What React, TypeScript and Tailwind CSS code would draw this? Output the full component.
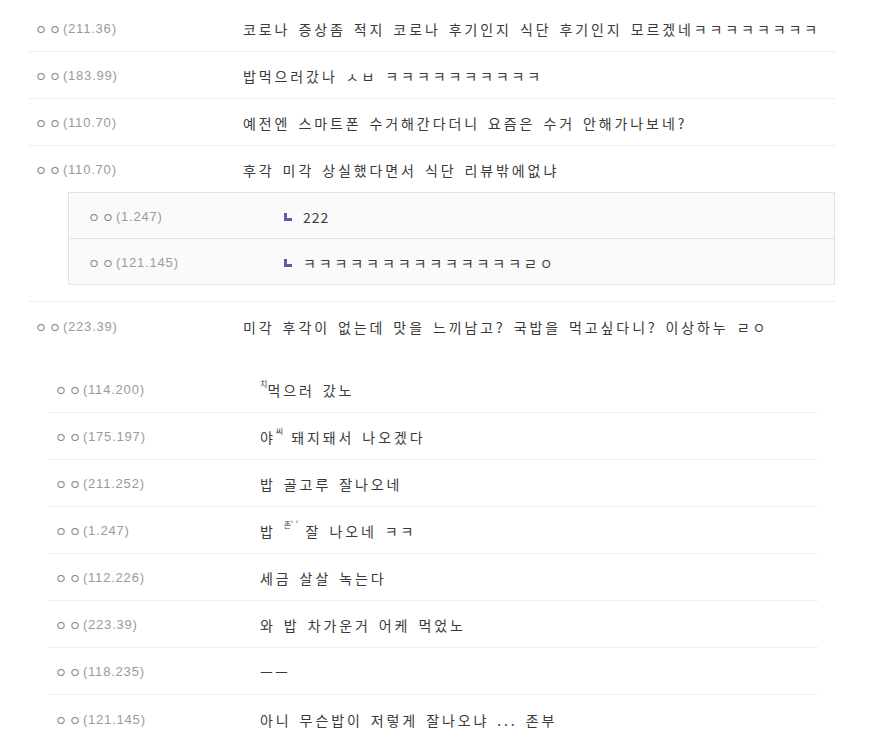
import type { ReactNode } from "react";

type Comment = { ip: string; text: ReactNode };

function spaced(s: string): ReactNode {
  const parts = s.split(/([\u3131-\u318E]+)/);
  return parts.map((p, i) =>
    /^[\u3131-\u318E]+$/.test(p) ? (
      <span key={i} className="tracking-[2.9px]">
        {p}
      </span>
    ) : (
      p
    ),
  );
}

const topComments: Comment[] = [
  { ip: "(211.36)", text: spaced("코로나 증상좀 적지 코로나 후기인지 식단 후기인지 모르겠네ㅋㅋㅋㅋㅋㅋㅋㅋ") },
  { ip: "(183.99)", text: spaced("밥먹으러갔나 ㅅㅂ ㅋㅋㅋㅋㅋㅋㅋㅋㅋㅋ") },
  { ip: "(110.70)", text: "예전엔 스마트폰 수거해간다더니 요즘은 수거 안해가나보네?" },
];

const replies: Comment[] = [
  { ip: "(1.247)", text: <span className="tracking-[1px]">222</span> },
  { ip: "(121.145)", text: spaced("ㅋㅋㅋㅋㅋㅋㅋㅋㅋㅋㅋㅋㅋㅋㄹㅇ") },
];

const Small = ({ children }: { children: ReactNode }) => (
  <span className="inline-block align-top text-[8px] leading-[10px] -mt-[1px] tracking-[0px]">{children}</span>
);

const bottomComments: Comment[] = [
  { ip: "(114.200)", text: <><Small>치</Small>먹으러 갔노</> },
  { ip: "(175.197)", text: <>야<Small>씨</Small> 돼지돼서 나오겠다</> },
  { ip: "(211.252)", text: "밥 골고루 잘나오네" },
  { ip: "(1.247)", text: <>밥 <Small>존ˈ ˈ</Small> 잘 나오네 {spaced("ㅋㅋ")}</> },
  { ip: "(112.226)", text: "세금 살살 녹는다" },
  { ip: "(223.39)", text: "와 밥 차가운거 어케 먹었노" },
  { ip: "(118.235)", text: <span className="tracking-[2px]">ㅡㅡ</span> },
  { ip: "(121.145)", text: "아니 무슨밥이 저렇게 잘나오냐 ... 존부" },
];

const kr = "font-['Noto_Sans_CJK_KR','Noto_Sans',sans-serif]";

function Name({ ip }: { ip: string }) {
  return (
    <span className="flex items-center whitespace-nowrap">
      <span className={`${kr} text-[13px] tracking-[2px] text-[#8a8a8a]`}>ㅇㅇ</span>
      <span className="font-['Liberation_Sans',Arial,sans-serif] text-[13px] tracking-[0.8px] text-[#9a9a9a]">
        {ip}
      </span>
    </span>
  );
}

function Row({
  c,
  nameW,
  padL,
  border,
  reply,
}: {
  c: Comment;
  nameW: string;
  padL: string;
  border: string;
  reply?: boolean;
}) {
  return (
    <div className={`flex h-[47px] items-center pt-[2px] ${border}`}>
      <div className={`${nameW} ${padL} shrink-0`}>
        <Name ip={c.ip} />
      </div>
      <div
        className={`${kr} flex items-center whitespace-nowrap text-[14px] leading-[20px] tracking-[2.9px] text-[#3a3a3a] [word-spacing:2px]`}
      >
        {reply && (
          <span className="mr-[11px] inline-block h-[8px] w-[8px] border-b-[3px] border-l-[3px] border-[#5b5ea8]" />
        )}
        <span>{c.text}</span>
      </div>
    </div>
  );
}

export default function App() {
  return (
    <div className="h-[749px] w-[871px] overflow-hidden bg-white">
      <div className="ml-[29px] w-[806px] pt-[5px]">
        {topComments.map((c, i) => (
          <Row key={i} c={c} nameW="w-[214px]" padL="pl-[6px]" border="border-b border-[#eeeeee]" />
        ))}
        <Row
          c={{ ip: "(110.70)", text: "후각 미각 상실했다면서 식단 리뷰밖에없냐" }}
          nameW="w-[214px]"
          padL="pl-[6px]"
          border="!h-[46px]"
        />
        <div className="border-b border-[#eeeeee] pb-[16px]">
          <div className="ml-[39px] border border-[#e2e2e2] bg-[#fafafa]">
            {replies.map((c, i) => (
              <Row
                key={i}
                c={c}
                nameW="w-[215px]"
                padL="pl-[19px]"
                border={i === 0 ? "!h-[46px] border-b border-[#e2e2e2]" : "!h-[45px]"}
                reply
              />
            ))}
          </div>
        </div>
        <Row
          c={{ ip: "(223.39)", text: spaced("미각 후각이 없는데 맛을 느끼남고? 국밥을 먹고싶다니? 이상하누 ㄹㅇ") }}
          nameW="w-[214px]"
          padL="pl-[6px]"
          border=""
        />
      </div>
      <div className="ml-[48px] mt-[17px] w-[770px]">
        {bottomComments.map((c, i) => (
          <Row
            key={i}
            c={c}
            nameW="w-[212px]"
            padL="pl-[7px]"
            border={i < bottomComments.length - 1 ? "border-b border-[#f1eeee]" : ""}
          />
        ))}
      </div>
    </div>
  );
}
